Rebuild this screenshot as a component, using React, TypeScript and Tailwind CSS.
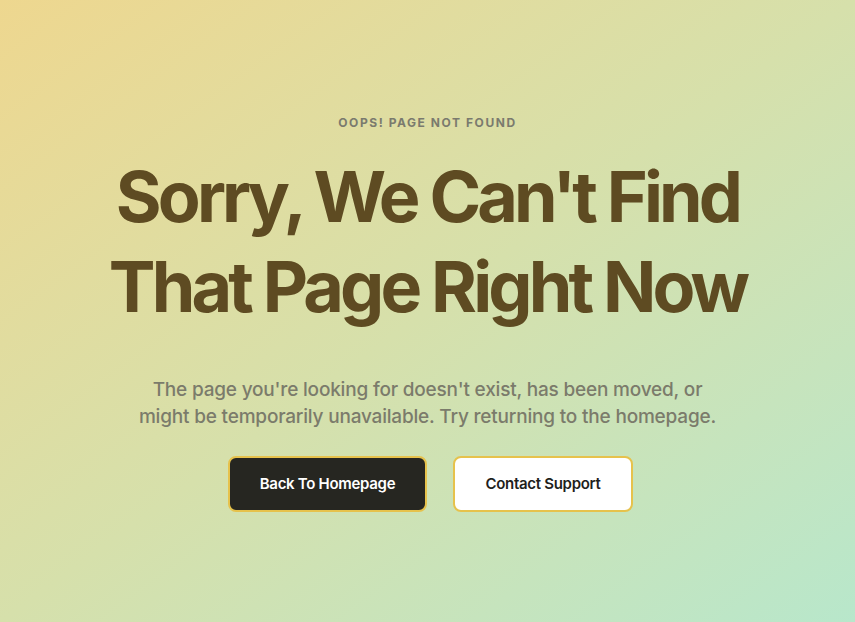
export default function App() {
  return (
    <div
      className="min-h-screen w-full flex items-center justify-center bg-gradient-to-br from-[#eed78f] via-[#d6e0ab] to-[#b8e7cb]"
      style={{ fontFamily: "Inter, 'Noto Sans', sans-serif" }}
    >
      <div className="flex flex-col items-center text-center pt-[4px]">
        <p className="text-[12px] font-bold tracking-[0.13em] text-[#7a7a6e] uppercase">
          Oops! Page Not Found
        </p>

        <h1 className="mt-[20px] text-[70px] leading-[90px] font-bold tracking-[-0.055em] text-[#5e4b22]">
          Sorry, We Can't Find
          <br />
          That Page Right Now
        </h1>

        <p className="mt-[44px] text-[19px] leading-[27px] font-medium tracking-[-0.01em] text-[#7b7b6b]">
          The page you're looking for doesn't exist, has been moved, or
          <br />
          might be temporarily unavailable. Try returning to the homepage.
        </p>

        <div className="mt-[26px] ml-[6px] flex items-center gap-[26px]">
          <button className="h-[56px] w-[199px] rounded-[8px] border-2 border-[#e6c24c] bg-[#262621] text-white text-[15px] font-semibold tracking-[-0.02em]">
            Back To Homepage
          </button>
          <button className="h-[56px] w-[180px] rounded-[8px] border-2 border-[#e6c24c] bg-white text-[#1f1f1c] text-[15px] font-semibold tracking-[-0.02em]">
            Contact Support
          </button>
        </div>
      </div>
    </div>
  );
}
